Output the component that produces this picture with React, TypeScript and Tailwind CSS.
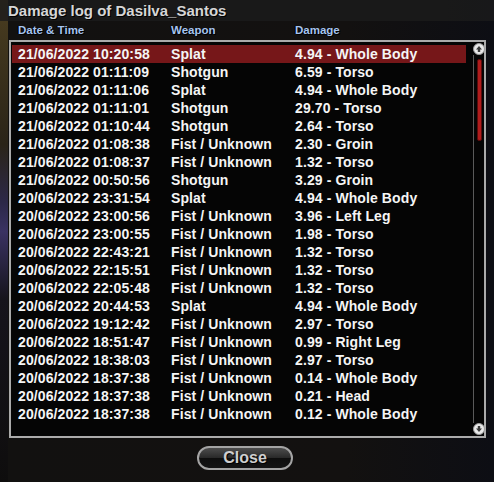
import React from "react";

type Hit = { time: string; weapon: string; damage: string };

const hits: Hit[] = [
  { time: "21/06/2022 10:20:58", weapon: "Splat", damage: "4.94 - Whole Body" },
  { time: "21/06/2022 01:11:09", weapon: "Shotgun", damage: "6.59 - Torso" },
  { time: "21/06/2022 01:11:06", weapon: "Splat", damage: "4.94 - Whole Body" },
  { time: "21/06/2022 01:11:01", weapon: "Shotgun", damage: "29.70 - Torso" },
  { time: "21/06/2022 01:10:44", weapon: "Shotgun", damage: "2.64 - Torso" },
  { time: "21/06/2022 01:08:38", weapon: "Fist / Unknown", damage: "2.30 - Groin" },
  { time: "21/06/2022 01:08:37", weapon: "Fist / Unknown", damage: "1.32 - Torso" },
  { time: "21/06/2022 00:50:56", weapon: "Shotgun", damage: "3.29 - Groin" },
  { time: "20/06/2022 23:31:54", weapon: "Splat", damage: "4.94 - Whole Body" },
  { time: "20/06/2022 23:00:56", weapon: "Fist / Unknown", damage: "3.96 - Left Leg" },
  { time: "20/06/2022 23:00:55", weapon: "Fist / Unknown", damage: "1.98 - Torso" },
  { time: "20/06/2022 22:43:21", weapon: "Fist / Unknown", damage: "1.32 - Torso" },
  { time: "20/06/2022 22:15:51", weapon: "Fist / Unknown", damage: "1.32 - Torso" },
  { time: "20/06/2022 22:05:48", weapon: "Fist / Unknown", damage: "1.32 - Torso" },
  { time: "20/06/2022 20:44:53", weapon: "Splat", damage: "4.94 - Whole Body" },
  { time: "20/06/2022 19:12:42", weapon: "Fist / Unknown", damage: "2.97 - Torso" },
  { time: "20/06/2022 18:51:47", weapon: "Fist / Unknown", damage: "0.99 - Right Leg" },
  { time: "20/06/2022 18:38:03", weapon: "Fist / Unknown", damage: "2.97 - Torso" },
  { time: "20/06/2022 18:37:38", weapon: "Fist / Unknown", damage: "0.14 - Whole Body" },
  { time: "20/06/2022 18:37:38", weapon: "Fist / Unknown", damage: "0.21 - Head" },
  { time: "20/06/2022 18:37:38", weapon: "Fist / Unknown", damage: "0.12 - Whole Body" },
];

function ArrowButton({ down }: { down?: boolean }) {
  return (
    <div className="w-[12px] h-[12px] rounded-full bg-[#e8e8e8] border border-[#9a9a9a] flex items-center justify-center">
      <svg width="8" height="8" viewBox="0 0 8 8" className={down ? "rotate-180" : ""}>
        <path d="M4 1 L7 4.5 H5.2 V7 H2.8 V4.5 H1 Z" fill="#3a3a3a" />
      </svg>
    </div>
  );
}

export default function App() {
  const selected = 0;

  return (
    <div className="w-[494px] h-[482px] overflow-hidden bg-[linear-gradient(90deg,transparent_8px,#121110_8px,#131110_70%,#0d0e14),linear-gradient(180deg,#4a3d20,#2a2418_30%,#2c2848_42%,#3a3262_48%,#16141c_62%,#0e0d0d)] font-['Liberation_Sans',Arial,sans-serif]">
      <div className="h-[21px] pl-[8px] leading-[21px] text-[15px] font-bold text-[#d6d6d6] bg-[#1b1b1b]/80 [text-shadow:1px_1px_0_#000]">
        Damage log of Dasilva_Santos
      </div>

      <div className="h-[19px] flex items-center pl-[18px] text-[11.5px] font-bold text-[#a6c4ee] [text-shadow:1px_1px_0_#000,-1px_0_0_#000]">
        <span className="w-[153px]">Date &amp; Time</span>
        <span className="w-[124px]">Weapon</span>
        <span>Damage</span>
      </div>

      <div className="ml-[9px] w-[477px] h-[398px] border-2 border-[#ababab] bg-[#050505] flex">
        <div className="w-[462px] pt-[3px] pl-[1px]">
          {hits.map((h, i) => (
            <div
              key={i}
              className={`w-[454px] h-[18px] flex items-center pl-[6px] text-[14px] font-bold tracking-[0.1px] text-[#f5f5f5] ${
                i === selected ? "bg-[#761719]" : ""
              }`}
            >
              <span className="w-[153px]">{h.time}</span>
              <span className="w-[124px]">{h.weapon}</span>
              <span>{h.damage}</span>
            </div>
          ))}
        </div>

        {/* scrollbar */}
        <div className="w-[11px] flex flex-col items-center pt-[1px] pb-[1px]">
          <div className="-mr-[1px]">
            <ArrowButton />
          </div>
          <div className="flex-1 w-full border-l border-[#5a5a5a] pl-[3px] pt-[4px]">
            <div className="w-[5px] h-[82px] rounded-[2px] bg-[#b01c1c] border border-[#5a0c0c]" />
          </div>
          <div className="-mr-[1px]">
            <ArrowButton down />
          </div>
        </div>
      </div>

      <div className="ml-[197px] mt-[8px] w-[96px] h-[24px] rounded-full border-2 border-[#a4a4a4] bg-[linear-gradient(#4c4c4c,#2a2a2a_48%,#0e0e0e_52%,#141414)] flex items-center justify-center text-[16px] font-bold text-[#cfcfcf] [text-shadow:1px_1px_0_#000]">
        Close
      </div>
    </div>
  );
}
